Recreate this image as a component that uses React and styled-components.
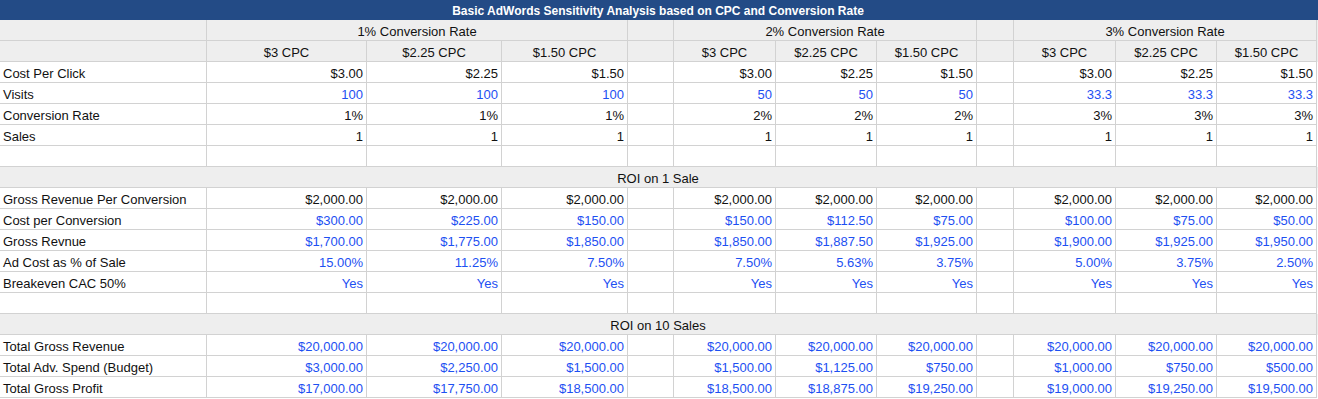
import React from 'react';
import styled, { createGlobalStyle } from 'styled-components';

const GlobalStyle = createGlobalStyle`
  body {
    margin: 0;
    background: #ffffff;
    font-family: 'Liberation Sans', Arial, sans-serif;
  }
`;

const COLUMNS = '207px 160px 135px 126px 46px 102px 101px 100px 37px 102px 101px 100px';

const Sheet = styled.div`
  width: 1318px;
  font-size: 13px;
  color: #111111;
`;

const TitleBar = styled.div`
  height: 20px;
  line-height: 22px;
  background: #234b86;
  color: #ffffff;
  font-weight: bold;
  font-size: 12px;
  text-align: center;
  padding-right: 2px;
`;

const Row = styled.div`
  display: grid;
  grid-template-columns: ${COLUMNS};
  background: ${(props) => (props.header ? '#eeeeee' : '#ffffff')};
`;

const Cell = styled.div`
  height: 20px;
  line-height: 23px;
  border-right: 1px solid #d2d2d2;
  border-bottom: 1px solid #d2d2d2;
  padding-left: ${(props) => (props.align === 'left' ? '3px' : '0')};
  padding-right: ${(props) => (props.align === 'right' ? '3px' : '0')};
  text-align: ${(props) => props.align || 'center'};
  color: ${(props) => (props.blue ? '#1d50f2' : '#111111')};
  grid-column: ${(props) => (props.span ? `span ${props.span}` : 'auto')};
  white-space: nowrap;
  overflow: hidden;
`;

const Banner = styled.div`
  grid-column: 1 / -1;
  height: 20px;
  line-height: 23px;
  text-align: center;
  border-bottom: 1px solid #d2d2d2;
  border-right: 1px solid #d2d2d2;
`;

const groups = ['1%', '2%', '3%'];
const cpcs = ['$3 CPC', '$2.25 CPC', '$1.50 CPC'];

const topRows = [
  { label: 'Cost Per Click', values: ['$3.00', '$2.25', '$1.50', '$3.00', '$2.25', '$1.50', '$3.00', '$2.25', '$1.50'] },
  { label: 'Visits', blue: true, values: ['100', '100', '100', '50', '50', '50', '33.3', '33.3', '33.3'] },
  { label: 'Conversion Rate', values: ['1%', '1%', '1%', '2%', '2%', '2%', '3%', '3%', '3%'] },
  { label: 'Sales', values: ['1', '1', '1', '1', '1', '1', '1', '1', '1'] },
];

const oneSaleRows = [
  { label: 'Gross Revenue Per Conversion', values: Array(9).fill('$2,000.00') },
  {
    label: 'Cost per Conversion',
    blue: true,
    values: ['$300.00', '$225.00', '$150.00', '$150.00', '$112.50', '$75.00', '$100.00', '$75.00', '$50.00'],
  },
  {
    label: 'Gross Revnue',
    blue: true,
    values: ['$1,700.00', '$1,775.00', '$1,850.00', '$1,850.00', '$1,887.50', '$1,925.00', '$1,900.00', '$1,925.00', '$1,950.00'],
  },
  {
    label: 'Ad Cost as % of Sale',
    blue: true,
    values: ['15.00%', '11.25%', '7.50%', '7.50%', '5.63%', '3.75%', '5.00%', '3.75%', '2.50%'],
  },
  { label: 'Breakeven CAC 50%', blue: true, values: Array(9).fill('Yes') },
];

const tenSalesRows = [
  { label: 'Total Gross Revenue', blue: true, values: Array(9).fill('$20,000.00') },
  {
    label: 'Total Adv. Spend (Budget)',
    blue: true,
    values: ['$3,000.00', '$2,250.00', '$1,500.00', '$1,500.00', '$1,125.00', '$750.00', '$1,000.00', '$750.00', '$500.00'],
  },
  {
    label: 'Total Gross Profit',
    blue: true,
    values: ['$17,000.00', '$17,750.00', '$18,500.00', '$18,500.00', '$18,875.00', '$19,250.00', '$19,000.00', '$19,250.00', '$19,500.00'],
  },
];

// values come in groups of three, with an empty spacer column after groups 1 and 2
const DataRow = ({ label, values, blue }) => {
  const cells = [];
  values.forEach((v, i) => {
    cells.push(
      <Cell key={`v${i}`} align="right" blue={blue}>
        {v}
      </Cell>
    );
    if (i === 2 || i === 5) cells.push(<Cell key={`s${i}`} />);
  });
  return (
    <Row>
      <Cell align="left">{label}</Cell>
      {cells}
    </Row>
  );
};

const BlankRow = () => (
  <Row>
    {Array.from({ length: 12 }).map((_, i) => (
      <Cell key={i} />
    ))}
  </Row>
);

const BannerRow = ({ children }) => (
  <Row header>
    <Banner>{children}</Banner>
  </Row>
);

const App = () => {
  return (
    <Sheet>
      <GlobalStyle />
      <TitleBar>Basic AdWords Sensitivity Analysis based on CPC and Conversion Rate</TitleBar>
      <Row header>
        <Cell />
        {groups.map((g, i) => (
          <React.Fragment key={g}>
            <Cell span={3}>{g} Conversion Rate</Cell>
            {i < 2 && <Cell />}
          </React.Fragment>
        ))}
      </Row>
      <Row header>
        <Cell />
        {groups.map((g, i) => (
          <React.Fragment key={g}>
            {cpcs.map((c) => (
              <Cell key={c}>{c}</Cell>
            ))}
            {i < 2 && <Cell />}
          </React.Fragment>
        ))}
      </Row>
      {topRows.map((r) => (
        <DataRow key={r.label} {...r} />
      ))}
      <BlankRow />
      <BannerRow>ROI on 1 Sale</BannerRow>
      {oneSaleRows.map((r) => (
        <DataRow key={r.label} {...r} />
      ))}
      <BlankRow />
      <BannerRow>ROI on 10 Sales</BannerRow>
      {tenSalesRows.map((r) => (
        <DataRow key={r.label} {...r} />
      ))}
    </Sheet>
  );
};

export default App;
